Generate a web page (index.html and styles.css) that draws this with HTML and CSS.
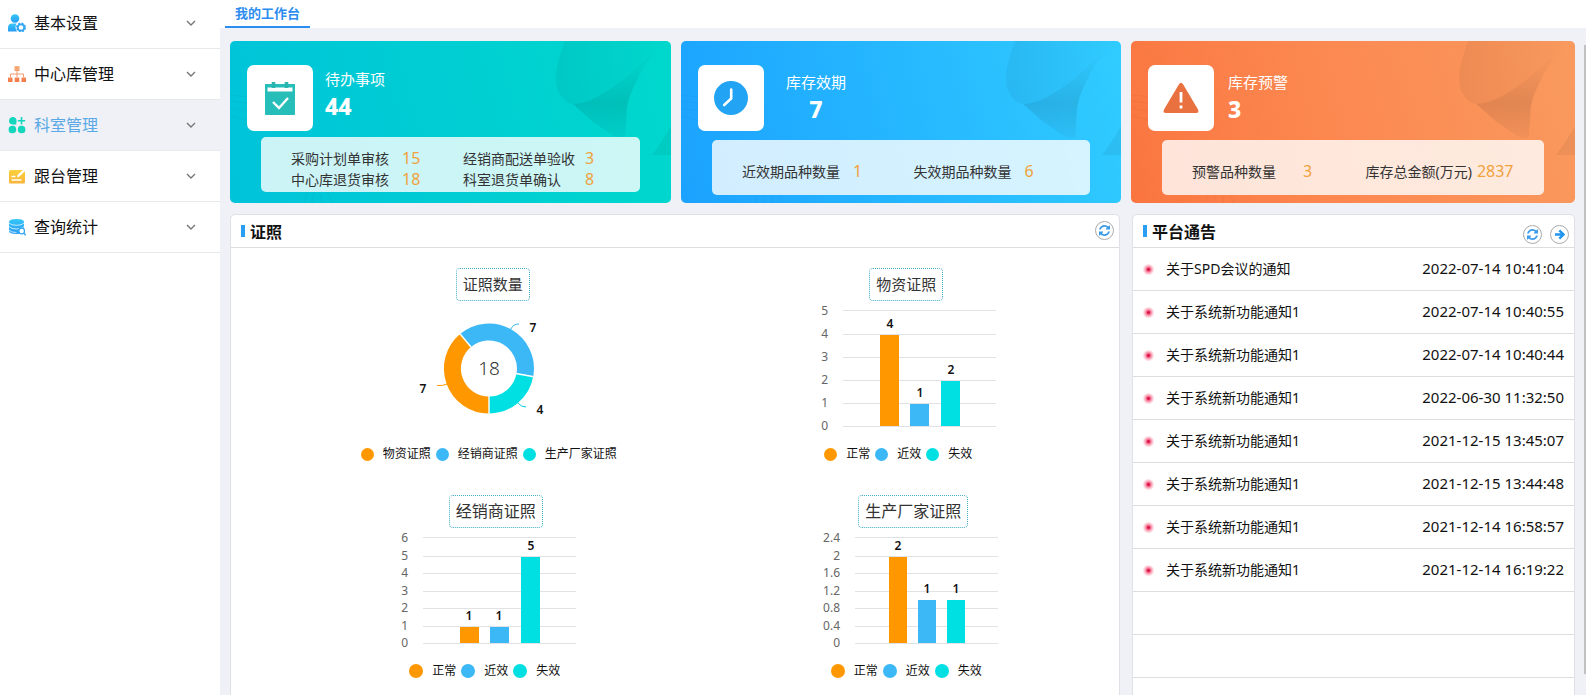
FILE: index.html
```html
<!DOCTYPE html>
<html lang="zh-CN">
<head>
<meta charset="utf-8">
<title>我的工作台</title>
<link rel="stylesheet" href="styles.css">
</head>
<body>
<svg class="defs" aria-hidden="true">
  <defs>
    <linearGradient id="g-blue" x1="0" y1="0" x2="0" y2="1"><stop offset="0" stop-color="#35c6f8"/><stop offset="1" stop-color="#2b9cf4"/></linearGradient>
    <linearGradient id="g-orange" x1="0" y1="0" x2="0" y2="1"><stop offset="0" stop-color="#f9b07c"/><stop offset="1" stop-color="#f4784a"/></linearGradient>
    <linearGradient id="g-yellow" x1="0" y1="0" x2="0" y2="1"><stop offset="0" stop-color="#fbd03c"/><stop offset="1" stop-color="#f8b43a"/></linearGradient>
    <linearGradient id="g-fold" x1="0" y1="0" x2="0" y2="1"><stop offset="0" stop-opacity="0"/><stop offset=".6" stop-opacity=".1"/><stop offset="1" stop-opacity=".03"/></linearGradient>
    <linearGradient id="g-leaf" x1="0" y1="0" x2="1" y2="0"><stop offset="0" stop-opacity=".05"/><stop offset="1" stop-opacity="0"/></linearGradient>
    <symbol id="chevron" viewBox="0 0 10 6"><path d="M1 1l4 4 4-4" fill="none" stroke="#777" stroke-width="1.4"/></symbol>
    <symbol id="refresh" viewBox="0 0 1536 1536"><path fill="#3a9bea" d="M1511 928q0 5-1 7-64 268-268 434.500t-478 166.500q-146 0-282.500-55t-243.500-157l-129 129q-19 19-45 19t-45-19-19-45v-448q0-26 19-45t45-19h448q26 0 45 19t19 45-19 45l-137 137q71 66 161 102t187 36q134 0 250-65t186-179q11-17 53-117 8-23 30-23h192q13 0 22.500 9.500t9.500 22.500zm25-800v448q0 26-19 45t-45 19h-448q-26 0-45-19t-19-45 19-45l138-138q-148-137-349-137-134 0-250 65t-186 179q-11 17-53 117-8 23-30 23h-199q-13 0-22.500-9.500t-9.500-22.500v-7q65-268 270-434.500t480-166.500q146 0 284 55.500t245 156.500l130-129q19-19 45-19t45 19 19 45z"/></symbol>
    <symbol id="arrow" viewBox="0 0 12 12"><path d="M1 6h9M5.800 1.500L10.300 6l-4.500 4.500" fill="none" stroke="#2196f0" stroke-width="2.600"/></symbol>
    <symbol id="fold" viewBox="0 0 441 162" preserveAspectRatio="none">
      <path d="M335 0C329 16 326 26 326 37C326 46 328 52 332 56Q337 63 343 63C358 63 376 52 395 37Q412 23 441 0z" fill="url(#g-leaf)"/>
      <path d="M343 63C358 63 376 52 395 37L425 11Q412 27 408 37Q398 56 397 67L395 97Q388 98 382 94L362 80z" fill="url(#g-fold)"/>
      <path d="M441 85Q430 104 422 114L441 114z" opacity=".05"/>
      <path d="M0 54q22 1 44 8M0 60q26 2 50 12M0 67q28 4 54 16M0 75q24 4 46 14M74 162q4-16 10-24M82 162q2-12 6-22M92 162q-2-14-6-22M102 162q-6-16-12-22" fill="none" stroke="#000" opacity=".04"/>
    </symbol>
  </defs>
</svg>
<div class="app">
  <nav class="sidebar" aria-label="主菜单">
    <button class="menu-item" type="button">
      <svg class="menu-icon" viewBox="0 0 18 18"><circle cx="7" cy="4.500" r="4.300" fill="url(#g-blue)"/><path d="M0 17.500v-4q0-4 4.500-4h4Q6.500 13.500 9 17.500z" fill="url(#g-blue)"/><circle cx="13" cy="13.500" r="3.200" fill="#fff" stroke="#2fa5f5" stroke-width="1.800"/><circle cx="13" cy="13.500" r="4.400" fill="none" stroke="#2fa5f5" stroke-width="1.200" stroke-dasharray="2 1.450"/></svg>
      <span class="menu-text">基本设置</span><svg class="chevron"><use href="#chevron"/></svg>
    </button>
    <button class="menu-item" type="button">
      <svg class="menu-icon" viewBox="0 0 18 18"><path d="M6.500 1h5v5h-5zM0 12.500h4.500V17H0zM6.700 12.500h4.600V17H6.700zM13.500 12.500H18V17h-4.500z" fill="url(#g-orange)"/><path d="M9 6v6M2.500 12V9h13v3" fill="none" stroke="#f59a6c"/></svg>
      <span class="menu-text">中心库管理</span><svg class="chevron"><use href="#chevron"/></svg>
    </button>
    <button class="menu-item is-active" type="button">
      <svg class="menu-icon" viewBox="0 0 18 18"><path d="M5 1a3.700 3.700 0 1 1-1 7.300Q1 8 1 4.800A3.800 3.800 0 0 1 5 1zM8.200 13.500A3.800 3.800 0 1 1 4.500 9.700q3.700-.2 3.700 3.800zM9.800 13.500q0-4 3.700-3.800a3.800 3.800 0 1 1-3.700 3.800z" fill="#14d6bd"/><path d="M8.300 5v3.500H4.500z" fill="#14d6bd"/><path d="M13.500 1v7.400M9.800 4.700h7.400" stroke="#14d6bd" stroke-width="1.600"/></svg>
      <span class="menu-text">科室管理</span><svg class="chevron"><use href="#chevron"/></svg>
    </button>
    <button class="menu-item" type="button">
      <svg class="menu-icon" viewBox="0 0 18 18"><rect x="1" y="3" width="16" height="13.500" rx="1.500" fill="url(#g-yellow)"/><path d="M3.500 9.500h4M3.500 13h10" stroke="#fff" stroke-width="1.300"/><path d="M9 10.500l.7-2.700L16.500 1.500l1.500 1.500-6.500 6.600z" fill="#fff"/></svg>
      <span class="menu-text">跟台管理</span><svg class="chevron"><use href="#chevron"/></svg>
    </button>
    <button class="menu-item" type="button">
      <svg class="menu-icon" viewBox="0 0 18 18"><path d="M1 4q0-3 7.500-3T16 4v9q0 3-7.500 3T1 13z" fill="url(#g-blue)"/><path d="M1 5q2 2.300 7.500 2.300T16 5M1 8.700q2 2.300 7.500 2.300T16 8.700M1 12.200q2 2.300 7.500 2.300" fill="none" stroke="#fff" stroke-width=".7"/><circle cx="13.700" cy="13" r="2.800" fill="#fff" stroke="#2fa5f5" stroke-width="1.200"/><path d="M15.800 15.200l2 2" stroke="#2fa5f5" stroke-width="1.400"/></svg>
      <span class="menu-text">查询统计</span><svg class="chevron"><use href="#chevron"/></svg>
    </button>
  </nav>
  <main class="main">
    <header class="tabs"><a class="tab" href="#workbench">我的工作台</a></header>
    <div class="content" id="workbench">
      <div class="cards">
        <section class="card card-todo">
          <svg class="card-fold"><use href="#fold"/></svg>
          <div class="card-head">
            <div class="card-icon"><svg viewBox="0 0 36 36"><path d="M3 4h30v30q0 1-1 1H4q-1 0-1-1z" fill="#27bdb9"/><path d="M5.500 7.500h25v4h-25z" fill="#fff"/><path d="M11.500 2v6M24.500 2v6" stroke="#2bb5ad" stroke-width="3.600"/><path d="M11 22l6 6 9-10" fill="none" stroke="#fff" stroke-width="2.400"/></svg></div>
            <div class="card-title"><h2>待办事项</h2><strong>44</strong></div>
          </div>
          <dl class="stats">
            <div class="stat"><dt>采购计划单审核</dt><dd>15</dd></div>
            <div class="stat stat-wide"><dt>经销商配送单验收</dt><dd>3</dd></div>
            <div class="stat"><dt>中心库退货审核</dt><dd>18</dd></div>
            <div class="stat stat-wide"><dt>科室退货单确认</dt><dd>8</dd></div>
          </dl>
        </section>
        <section class="card card-expiry">
          <svg class="card-fold"><use href="#fold"/></svg>
          <div class="card-head">
            <div class="card-icon"><svg viewBox="0 0 36 36"><circle cx="18" cy="18" r="17" fill="#22a3f3"/><path d="M18.200 9.500v9l-7 6.500" fill="none" stroke="#fff" stroke-width="2.600" stroke-linecap="round"/></svg></div>
            <div class="card-title"><h2>库存效期</h2><strong>7</strong></div>
          </div>
          <dl class="stats">
            <div class="stat"><dt>近效期品种数量</dt><dd>1</dd></div>
            <div class="stat"><dt>失效期品种数量</dt><dd>6</dd></div>
          </dl>
        </section>
        <section class="card card-alert">
          <svg class="card-fold"><use href="#fold"/></svg>
          <div class="card-head">
            <div class="card-icon"><svg viewBox="0 0 36 36"><path d="M15.800 4.500q2.200-3.500 4.400 0L35 29.500q1.200 3.500-2 3.500H3q-3.200 0-2-3.500z" fill="#e9703f"/><path d="M18 12v10.500M18 25.500v3" stroke="#fff" stroke-width="2.800"/></svg></div>
            <div class="card-title"><h2>库存预警</h2><strong>3</strong></div>
          </div>
          <dl class="stats">
            <div class="stat"><dt>预警品种数量</dt><dd>3</dd></div>
            <div class="stat stat-tight"><dt>库存总金额(万元)</dt><dd>2837</dd></div>
          </dl>
        </section>
      </div>
      <div class="panels">
        <section class="panel">
          <header class="panel-head">
            <h2>证照</h2>
            <div class="tools"><button class="tool" type="button" aria-label="刷新"><svg><use href="#refresh"/></svg></button></div>
          </header>
          <div class="charts">
            <figure class="chart chart-total">
              <figcaption>证照数量</figcaption>
              <svg class="plot" viewBox="0 0 280 144" height="144">
                <g fill="none" stroke-width="17">
                  <path d="M140 104A36.500 36.500 0 0 1 116.500 39.500" stroke="#ff9800"/>
                  <path d="M116.500 39.500A36.500 36.500 0 0 1 175.900 73.800" stroke="#3bb8f5"/>
                  <path d="M175.900 73.800A36.500 36.500 0 0 1 140 104" stroke="#00dfe2"/>
                </g>
                <path d="M140 94v20M122 46L109.500 31M167 72.500L186 76" stroke="#fff" stroke-width="1.400"/>
                <path d="M162 28q2-5 8-5" fill="none" stroke="#3bb8f5"/>
                <path d="M169 102q3 4 8 4" fill="none" stroke="#00cdd5"/>
                <path d="M98 83q-4 2-10 1.500" fill="none" stroke="#ff9800"/>
                <text class="total" x="140" y="74">18</text>
                <text class="value" x="184" y="31">7</text>
                <text class="value" x="191" y="113">4</text>
                <text class="value" x="74" y="92">7</text>
              </svg>
              <ul class="legend"><li class="c1">物资证照</li><li class="c2">经销商证照</li><li class="c3">生产厂家证照</li></ul>
            </figure>
            <figure class="chart">
              <figcaption>物资证照</figcaption>
              <svg class="plot" viewBox="0 0 280 144" height="144">
                <path class="grid" d="M77 9.500h153M77 33.500h153M77 56.500h153M77 79.500h153M77 102.500h153M77 125.500h153"/>
                <g class="axis"><text x="62" y="14">5</text><text x="62" y="37">4</text><text x="62" y="60">3</text><text x="62" y="83">2</text><text x="62" y="106">1</text><text x="62" y="129">0</text></g>
                <path fill="#ff9800" d="M114 34h19v91h-19z"/><path fill="#3bb8f5" d="M144 103h19v22h-19z"/><path fill="#00dfe2" d="M175 80h19v45h-19z"/>
                <text class="value" x="124" y="27">4</text><text class="value" x="154" y="96">1</text><text class="value" x="185" y="73">2</text>
              </svg>
              <ul class="legend legend-left"><li class="c1">正常</li><li class="c2">近效</li><li class="c3">失效</li></ul>
            </figure>
            <figure class="chart chart-large">
              <figcaption>经销商证照</figcaption>
              <svg class="plot" viewBox="0 0 280 134" height="134">
                <path class="grid" d="M74 9.500h153M74 28.500h153M74 45.500h153M74 63.500h153M74 80.500h153M74 98.500h153M74 115.500h153"/>
                <g class="axis"><text x="59" y="14">6</text><text x="59" y="32">5</text><text x="59" y="49">4</text><text x="59" y="67">3</text><text x="59" y="84">2</text><text x="59" y="102">1</text><text x="59" y="119">0</text></g>
                <path fill="#ff9800" d="M111 99h19v16h-19z"/><path fill="#3bb8f5" d="M141 99h19v16h-19z"/><path fill="#00dfe2" d="M172 29h19v86h-19z"/>
                <text class="value" x="120" y="92">1</text><text class="value" x="150" y="92">1</text><text class="value" x="182" y="22">5</text>
              </svg>
              <ul class="legend legend-near"><li class="c1">正常</li><li class="c2">近效</li><li class="c3">失效</li></ul>
            </figure>
            <figure class="chart chart-large">
              <figcaption>生产厂家证照</figcaption>
              <svg class="plot" viewBox="0 0 280 134" height="134">
                <path class="grid" d="M89 9.500h143M89 28.500h143M89 45.500h143M89 63.500h143M89 80.500h143M89 98.500h143M89 115.500h143"/>
                <g class="axis"><text x="74" y="14">2.4</text><text x="74" y="32">2</text><text x="74" y="49">1.6</text><text x="74" y="67">1.2</text><text x="74" y="84">0.8</text><text x="74" y="102">0.4</text><text x="74" y="119">0</text></g>
                <path fill="#ff9800" d="M123 29h18v86h-18z"/><path fill="#3bb8f5" d="M152 72h18v43h-18z"/><path fill="#00dfe2" d="M181 72h18v43h-18z"/>
                <text class="value" x="132" y="22">2</text><text class="value" x="161" y="65">1</text><text class="value" x="190" y="65">1</text>
              </svg>
              <ul class="legend"><li class="c1">正常</li><li class="c2">近效</li><li class="c3">失效</li></ul>
            </figure>
          </div>
        </section>
        <section class="panel">
          <header class="panel-head">
            <h2>平台通告</h2>
            <div class="tools tools-low">
              <button class="tool" type="button" aria-label="刷新"><svg><use href="#refresh"/></svg></button>
              <button class="tool" type="button" aria-label="更多"><svg><use href="#arrow"/></svg></button>
            </div>
          </header>
          <ul class="notices">
            <li><a href="#n1">关于SPD会议的通知</a><time>2022-07-14 10:41:04</time></li>
            <li><a href="#n2">关于系统新功能通知1</a><time>2022-07-14 10:40:55</time></li>
            <li><a href="#n3">关于系统新功能通知1</a><time>2022-07-14 10:40:44</time></li>
            <li><a href="#n4">关于系统新功能通知1</a><time>2022-06-30 11:32:50</time></li>
            <li><a href="#n5">关于系统新功能通知1</a><time>2021-12-15 13:45:07</time></li>
            <li><a href="#n6">关于系统新功能通知1</a><time>2021-12-15 13:44:48</time></li>
            <li><a href="#n7">关于系统新功能通知1</a><time>2021-12-14 16:58:57</time></li>
            <li><a href="#n8">关于系统新功能通知1</a><time>2021-12-14 16:19:22</time></li>
            <li class="is-empty"></li>
            <li class="is-empty"></li>
            <li class="is-empty"></li>
          </ul>
        </section>
      </div>
    </div>
    <div class="scroll-thumb"></div>
  </main>
</div>
</body>
</html>
```

FILE: styles.css
```css
* { box-sizing: border-box; }

body,
h2,
dl,
dd,
ul,
figure {
  margin: 0;
  padding: 0;
}

body {
  font-family: "Noto Sans", "Noto Sans CJK SC", sans-serif;
  font-size: 14px;
  color: #111;
  background: #eff1f6;
}

ul { list-style: none; }
a { color: inherit; text-decoration: none; }
button { font: inherit; color: inherit; background: none; border: 0; padding: 0; cursor: pointer; }
svg { display: block; }

.defs { position: absolute; width: 0; height: 0; }

.app {
  display: flex;
  height: 100vh;
  overflow: hidden;
}

/* Side menu */
.sidebar {
  flex: 0 0 220px;
  background: #fff;
  display: flex;
  flex-direction: column;
  margin-top: -2px;
}

.menu-item {
  display: flex;
  align-items: center;
  gap: 8px;
  height: 51px;
  padding: 0 24px 0 8px;
  border-bottom: 1px solid #e8e9ec;
  font-size: 16px;
  text-align: left;
}

.menu-item.is-active { background: #eff1f6; }
.is-active .menu-text { color: #5aa9e6; }
.menu-icon { width: 18px; height: 18px; }
.menu-text { flex: 1; padding-bottom: 2px; }
.chevron { width: 10px; height: 6px; }

/* Tabs */
.main {
  flex: 1;
  min-width: 0;
  position: relative;
}

.tabs {
  display: flex;
  height: 28px;
  padding-left: 5px;
  background: #fff;
}

.tab {
  padding: 0 10px;
  border-bottom: 2px solid #2d8cf0;
  color: #2d8cf0;
  font-size: 13px;
  font-weight: 700;
  line-height: 27px;
}

.content { padding: 13px 11px 0 10px; }

/* Summary cards */
.cards {
  display: grid;
  grid-template-columns: 441fr 440fr 444fr;
  gap: 10px;
}

.card {
  position: relative;
  min-height: 162px;
  padding: 24px 31px 8px;
  border-radius: 5px;
  overflow: hidden;
}

.card-todo { background: linear-gradient(75deg, #00c3da, #00d8cc); }
.card-expiry { background: linear-gradient(75deg, #1ba2ff, #30ccff); }
.card-alert { background: linear-gradient(75deg, #fa7540, #fc8850 45%, #f99a5f); }

.card-fold { position: absolute; inset: 0; width: 100%; height: 100%; }

.card-head {
  position: relative;
  display: flex;
  gap: 12px;
  margin-left: -14px;
}

.card-icon {
  display: grid;
  place-items: center;
  width: 66px;
  height: 66px;
  border-radius: 7px;
  background: #fff;
}

.card-icon svg { width: 36px; height: 36px; }

.card-title { padding-top: 4px; color: #fff; }
.card-title h2 { font-size: 15px; font-weight: 400; line-height: 26px; }
.card-title strong { display: block; font-size: 23px; font-weight: 800; line-height: 28px; }
.card-todo .card-title { padding-top: 1px; }
.card-expiry .card-title { padding-left: 10px; text-align: center; }
.card-alert .card-title { padding-left: 2px; }

.stats {
  position: relative;
  display: grid;
  grid-template-columns: 1fr 1fr;
  align-content: start;
  height: 55px;
  margin-top: 9px;
  padding: 21px 5px 0 30px;
  border-radius: 5px;
  background: rgba(255, 255, 255, .8);
}

.card-todo .stats { margin-top: 6px; padding-top: 11px; }

.stat { display: flex; gap: 13px; line-height: 21px; color: #333; }
.stat dt { min-width: 98px; white-space: nowrap; }
.stat dd { font-size: 16px; color: #f0a23c; }
.stat-wide { gap: 10px; }
.stat-wide dt { min-width: 112px; }
.stat-tight { gap: 5px; }

/* Panels */
.panels {
  display: grid;
  grid-template-columns: 890fr 443fr;
  gap: 12px;
  margin-top: 11px;
}

.panel {
  min-height: 560px;
  border: 1px solid #dfe1e6;
  border-radius: 5px;
  background: #fff;
}

.panel-head {
  display: flex;
  justify-content: space-between;
  height: 33px;
  padding: 0 5px 0 10px;
  border-bottom: 1px solid #dcdde0;
}

.panel-head h2 {
  display: flex;
  align-items: center;
  gap: 5px;
  font-size: 16px;
  font-weight: 700;
}

.panel-head h2::before {
  content: "";
  width: 4px;
  height: 12px;
  background: #2a9df4;
}

.tools { display: flex; gap: 8px; padding-top: 6px; }
.tools-low { padding-top: 10px; }

.tool {
  display: grid;
  place-items: center;
  width: 19px;
  height: 19px;
  border: 1px solid #aaa;
  border-radius: 50%;
}

.tool svg { width: 11px; height: 11px; }

/* Charts */
.charts {
  display: grid;
  grid-template-columns: 1fr 1fr;
  row-gap: 32px;
  padding: 20px 4px 24px 49px;
}

.chart { display: flex; flex-direction: column; align-items: center; }

.chart figcaption {
  padding: 0 6px;
  border: 1px dotted #45aec8;
  border-radius: 4px;
  font-size: 15px;
  line-height: 31px;
  color: #333;
}

.chart-total figcaption { margin-left: 8px; }
.chart-large figcaption { margin-left: 14px; font-size: 16px; }

.plot { width: 280px; }
.grid { fill: none; stroke: #e0e2e6; }
.axis { font-size: 12px; fill: #666; text-anchor: end; }
.value { font-size: 12px; font-weight: 600; fill: #111; text-anchor: middle; }
.total { font-size: 19px; font-weight: 300; fill: #333; text-anchor: middle; }

.legend { display: flex; gap: 5px; font-size: 12px; line-height: 18px; }
.legend li { display: flex; align-items: center; gap: 9px; }
.legend li::before { content: ""; width: 13px; height: 13px; border-radius: 50%; background: currentColor; }
.legend .c1::before { background: #ff9800; }
.legend .c2::before { background: #3bb8f5; }
.legend .c3::before { background: #00dfe2; }
.legend-left { margin-right: 16px; }
.legend-near { margin-right: 8px; }
.chart-large li::before { width: 14px; height: 14px; }

/* Notices */
.notices li {
  display: flex;
  align-items: center;
  height: 43px;
  padding: 0 10px;
  border-bottom: 1px solid #dcdde0;
}

.notices li::before {
  content: "";
  width: 11px;
  height: 11px;
  margin-right: 12px;
  border-radius: 50%;
  background: radial-gradient(circle, #d8174a 0 1px, #f4688a 2px, #fbc3cf 4px, #fde0e6 5px);
}

.notices .is-empty::before { content: none; }
.notices a { flex: 1; padding-bottom: 2px; }
.notices time { padding-bottom: 2px; font-size: 15px; }

.scroll-thumb {
  position: absolute;
  top: 45px;
  right: 0;
  width: 2px;
  height: 629px;
  background: #c1c1c1;
}
```
